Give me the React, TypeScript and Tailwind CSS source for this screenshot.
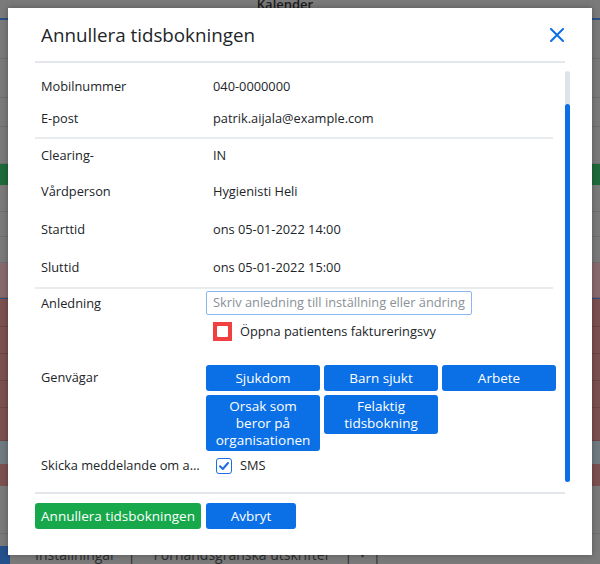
import React from "react";

const font = { fontFamily: '"Open Sans", "Noto Sans", sans-serif' };

function Row({ label, value, h }: { label: string; value: string; h: string }) {
  return (
    <div className={`flex items-center ${h}`}>
      <div className="w-[171px] pl-[6px] shrink-0">{label}</div>
      <div className="pl-[7px]">{value}</div>
    </div>
  );
}

function BlueBtn({ children }: { children: React.ReactNode }) {
  return (
    <div className="min-h-[26px] flex items-center justify-center text-center rounded-[3px] bg-[#0b6fe6] text-white leading-[17px] py-[2.5px] px-2">
      {children}
    </div>
  );
}

export default function App() {
  return (
    <div className="relative w-[600px] h-[564px] overflow-hidden bg-[#7a7a7a] text-[12.8px] text-[#212529]" style={font}>
      {/* dimmed background app */}
      <div className="flex flex-col w-full h-full">
        <div className="h-[19px] flex justify-center items-start">
          <span className="text-[#1a1a1a] text-[13px] font-semibold leading-[10px] -mt-[1px] ml-[-30px]">Kalender</span>
        </div>
        <div className="h-[2px] bg-[#2a4f85]" />
        <div className="h-[40px] border-b border-[#6f6f6f]" />
        <div className="h-[40px] border-b border-[#6f6f6f]" />
        <div className="h-[30px] border-b border-[#6f6f6f]" />
        <div className="h-[38px] border-b border-[#6f6f6f]" />
        <div className="h-[22px] bg-[#1e6a3b]" />
        <div className="h-[28px] border-b border-[#6f6f6f]" />
        <div className="h-[26px] border-b border-[#6f6f6f]" />
        <div className="h-[26px] border-b border-[#6f6f6f]" />
        <div className="h-[36px] bg-[#876a6d] border-b border-[#7a5e61]" />
        <div className="h-[2px] bg-[#2a4f85]" />
        <div className="h-[28px] bg-[#7b5051] border-b border-[#6d4647]" />
        <div className="h-[28px] bg-[#7b5051] border-b border-[#6d4647]" />
        <div className="h-[28px] bg-[#7b5051] border-b border-[#6d4647]" />
        <div className="h-[28px] bg-[#7b5051] border-b border-[#6d4647]" />
        <div className="h-[34px] bg-[#7b5051] border-b border-[#6d4647]" />
        <div className="h-[24px] bg-[#6f7b81]" />
        <div className="h-[22px] bg-[#7b5051]" />
        <div className="h-[50px] border-b border-[#6f6f6f]" />
        <div className="h-[30px] flex items-center text-[#2b2b2b] text-[14px] pt-[12px]">
          <div className="w-[10px] h-full bg-[#24508c]" />
          <span className="ml-[25px]">Inställningar</span>
          <span className="ml-[12px]">|</span>
          <span className="ml-[18px]">Förhandsgranska utskrifter</span>
          <span className="ml-[14px]">|</span>
          <span className="ml-[8px] text-[10px]">▾</span>
          <span className="ml-[8px]">|</span>
        </div>
      </div>

      {/* modal */}
      <div className="absolute left-[8px] top-[8px] w-[584px] h-[547px] bg-white shadow-[0_0_6px_rgba(0,0,0,0.3)] flex flex-col">
        {/* header */}
        <div className="mx-[27px] h-[55px] border-b-2 border-[#e3e6ea] flex items-center justify-between">
          <div className="pl-[6px] text-[18.8px] text-[#212529] pt-[1px]">Annullera tidsbokningen</div>
          <svg width="14" height="14" viewBox="0 0 14 14" className="mr-[1px] mt-[1px]">
            <path d="M1 1 L13 13 M13 1 L1 13" stroke="#0b6fe6" strokeWidth="2" strokeLinecap="round" />
          </svg>
        </div>

        {/* body */}
        <div className="flex h-[429px] pl-[27px]">
          <div className="w-[518px] shrink-0">
            <div className="pt-[8px] pb-[2px] border-b-2 border-[#e9ecef]">
              <Row label="Mobilnummer" value="040-0000000" h="h-[32px]" />
              <Row label="E-post" value="patrik.aijala@example.com" h="h-[32px]" />
            </div>
            <div className="border-b-2 border-[#e9ecef]">
              <Row label="Clearing-" value="IN" h="h-[34px]" />
              <Row label="Vårdperson" value="Hygienisti Heli" h="h-[38px]" />
              <Row label="Starttid" value="ons 05-01-2022 14:00" h="h-[38px]" />
              <Row label="Sluttid" value="ons 05-01-2022 15:00" h="h-[38px]" />
            </div>
            <div className="flex pt-[2px]">
              <div className="w-[171px] pl-[6px] shrink-0 leading-[24px]">Anledning</div>
              <div className="flex flex-col">
                <div className="w-[266px] h-[24px] border border-[#8ab8f5] rounded-[2px] px-[6px] flex items-center text-[#8a9198] whitespace-nowrap overflow-hidden">
                  Skriv anledning till inställning eller ändring
                </div>
                <div className="flex items-center mt-[7px] ml-[7px] h-[19px]">
                  <div className="w-[19px] h-[19px] bg-[#f04040] p-[4px]">
                    <div className="w-full h-full bg-white rounded-[1px]" />
                  </div>
                  <span className="ml-[8px]">Öppna patientens faktureringsvy</span>
                </div>
              </div>
            </div>
            <div className="flex mt-[24px]">
              <div className="w-[171px] pl-[6px] shrink-0 leading-[24px]">Genvägar</div>
              <div className="grid grid-cols-[114px_114px_114px] gap-[4px] items-start text-[13.5px] w-[350px] shrink-0">
                <BlueBtn>Sjukdom</BlueBtn>
                <BlueBtn>Barn sjukt</BlueBtn>
                <BlueBtn>Arbete</BlueBtn>
                <BlueBtn>Orsak som beror på organisationen</BlueBtn>
                <BlueBtn>Felaktig tidsbokning</BlueBtn>
              </div>
            </div>
            <div className="flex items-center mt-[6px] h-[18px]">
              <div className="w-[171px] pl-[6px] pr-[2px] shrink-0 truncate">Skicka meddelande om anledning</div>
              <div className="ml-[10px] w-[16px] h-[16px] border-[1.5px] border-[#1c6fe0] rounded-[3px] flex items-center justify-center">
                <svg width="12" height="12" viewBox="0 0 12 12">
                  <path d="M2 6.2 L4.8 9 L10 3" stroke="#1c6fe0" strokeWidth="2" fill="none" strokeLinecap="round" strokeLinejoin="round" />
                </svg>
              </div>
              <span className="ml-[8px]">SMS</span>
            </div>
          </div>
          <div className="ml-[12px] mt-[8px] w-[5px] h-[411px] rounded-full bg-[#dfe3e8] flex flex-col justify-end">
            <div className="h-[378px] rounded-full bg-[#0b6fe6]" />
          </div>
        </div>

        {/* footer */}
        <div className="mx-[27px] w-[530px] border-t-2 border-[#e3e6ea] pt-[9px] flex gap-[5px] text-[13.5px] text-white">
          <div className="w-[166px] h-[26px] rounded-[3px] bg-[#17a84b] flex items-center justify-center">Annullera tidsbokningen</div>
          <div className="w-[90px] h-[26px] rounded-[3px] bg-[#0b6fe6] flex items-center justify-center">Avbryt</div>
        </div>
      </div>
    </div>
  );
}
